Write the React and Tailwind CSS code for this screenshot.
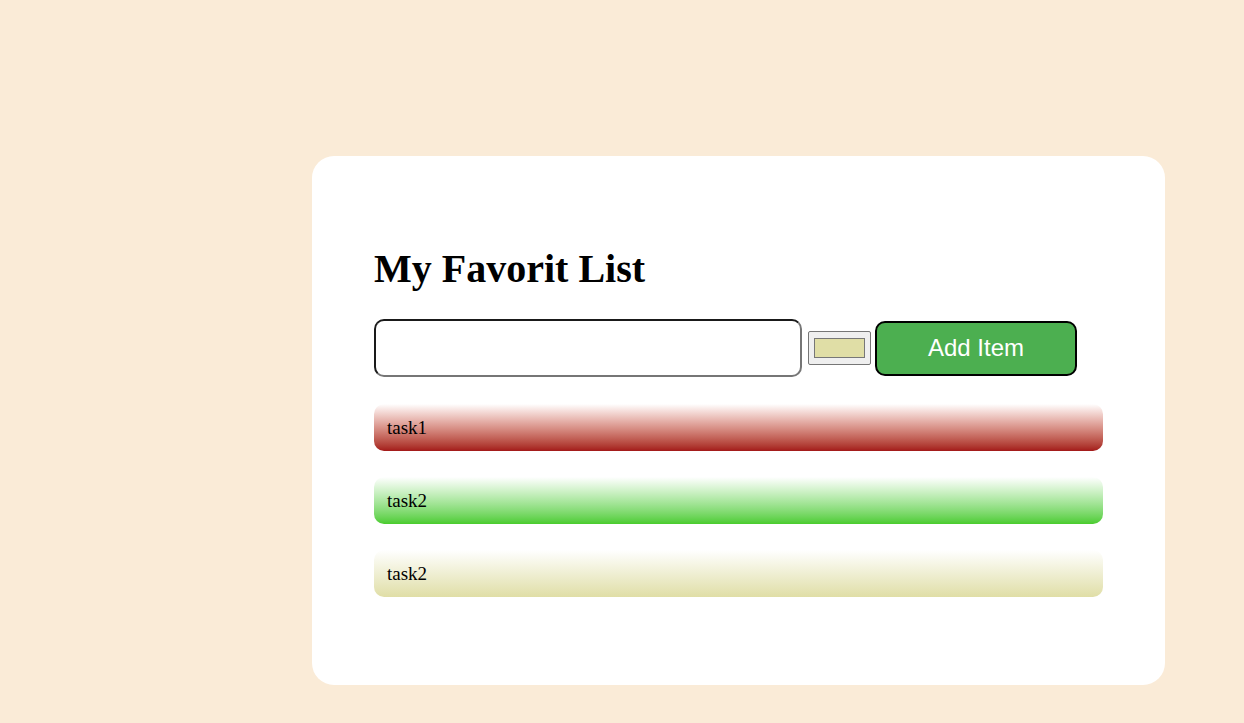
export default function App() {
  const items = [
    { t: "task1", c: "from-white to-[#a31818]" },
    { t: "task2", c: "from-white to-[#49cc2c]" },
    { t: "task2", c: "from-white to-[#e0dea6]" },
  ];
  return (
    <div className="min-h-[723px] w-full bg-[#faebd7] pt-[156px] pl-[312px]">
      <div className="w-[853px] h-[529px] bg-white rounded-[22px] px-[62px] pt-[90px] flex flex-col" style={{ fontFamily: '"Liberation Serif", serif' }}>
        <h1 className="text-[40px] leading-[46px] font-bold text-black m-0">My Favorit List</h1>
        <div className="flex items-center mt-[27px]">
          <div className="w-[428px] h-[58px] rounded-[10px] border-2 border-t-[#1a1a1a] border-l-[#1a1a1a] border-r-[#767676] border-b-[#767676] bg-white"></div>
          <div className="ml-[6px] w-[63px] h-[34px] bg-[#efefef] border border-[#767676] rounded-[2px] flex items-center justify-center">
            <div className="w-[51px] h-[20px] bg-[#e0dea6] border border-[#777]"></div>
          </div>
          <div className="ml-[4px] w-[202px] h-[55px] bg-[#4caf50] border-2 border-black rounded-[10px] flex items-center justify-center text-white text-[24px]" style={{ fontFamily: '"Liberation Sans", Arial, sans-serif' }}>
            Add Item
          </div>
        </div>
        <div className="flex flex-col gap-[26px] mt-[27px]">
          {items.map((it, i) => (
            <div key={i} className={`w-[729px] h-[47px] rounded-[10px] bg-gradient-to-b ${it.c} flex items-center pl-[13px] pt-[2px] text-[19px] text-black`}>
              {it.t}
            </div>
          ))}
        </div>
      </div>
    </div>
  );
}
